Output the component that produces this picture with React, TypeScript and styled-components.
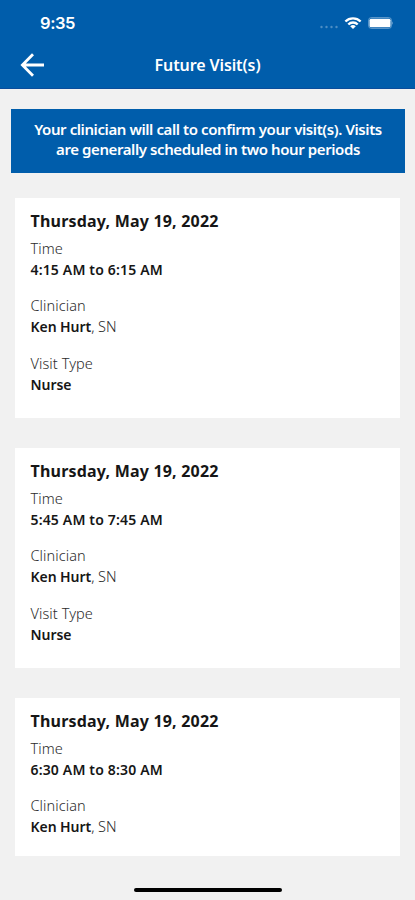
import React from "react";
import styled, { createGlobalStyle } from "styled-components";

const GlobalStyle = createGlobalStyle`
  * { box-sizing: border-box; }
  body {
    margin: 0;
    background: #f1f1f1;
    font-family: "Noto Sans", "Open Sans", sans-serif;
  }
`;

const Screen = styled.div`
  display: flex;
  flex-direction: column;
  width: 415px;
  height: 900px;
  overflow: hidden;
  background: #f1f1f1;
`;

const Header = styled.header`
  flex: none;
  height: 89px;
  background: #005dab;
  border-bottom: 1px solid #0a4d9c;
  color: #fff;
`;

const StatusBar = styled.div`
  display: flex;
  align-items: center;
  justify-content: space-between;
  height: 46px;
  padding: 0 22px 0 40px;
`;

const Clock = styled.span`
  font: 600 16.5px/20px Inter, sans-serif;
  letter-spacing: -0.4px;
`;

const StatusIcons = styled.div`
  display: flex;
  align-items: center;
`;

const NavBar = styled.div`
  display: grid;
  grid-template-columns: 60px 1fr 60px;
  align-items: center;
  height: 38px;
`;

const BackButton = styled.button`
  display: flex;
  padding: 0 0 0 19px;
  border: 0;
  background: none;
  color: inherit;
`;

const Title = styled.h1`
  margin: 0;
  text-align: center;
  font-size: 16px;
  line-height: 22px;
  font-weight: 600;
  letter-spacing: -0.1px;
`;

const Banner = styled.p`
  flex: none;
  height: 64px;
  margin: 20px 10px 25px 11px;
  padding-top: 10px;
  background: #005dab;
  color: #fff;
  text-align: center;
  font-size: 15px;
  line-height: 20px;
  font-weight: 600;
  letter-spacing: -0.41px;
  white-space: nowrap;
`;

const VisitList = styled.main`
  display: flex;
  flex-direction: column;
  gap: 30px;
  padding: 0 15px;
`;

const Card = styled.section<{ $short?: boolean }>`
  height: ${(p) => (p.$short ? 158 : 220)}px;
  padding: 12px 16px 0 15.5px;
  background: #fff;
  color: #161616;
  white-space: nowrap;
`;

const VisitDate = styled.h2`
  margin: 0 0 6px;
  font-size: 16px;
  line-height: 22px;
  font-weight: 700;
  letter-spacing: 0.2px;
`;

const Field = styled.div`
  margin-bottom: 15.3px;
  line-height: 21px;
`;

const Label = styled.div`
  font-size: 14.5px;
  font-weight: 300;
  letter-spacing: 0.08px;
  color: #2b2b2b;
`;

const Value = styled.div<{ $wide?: boolean }>`
  font-size: 14px;
  font-weight: 600;
  letter-spacing: ${(p) => (p.$wide ? 0.16 : -0.06)}px;
`;

const Suffix = styled.span`
  font-size: 14.5px;
  font-weight: 300;
  color: #2b2b2b;
`;

const HomeIndicator = styled.div`
  flex: none;
  width: 148px;
  height: 4px;
  margin: 32px 0 0 134px;
  border-radius: 2px;
  background: #000;
`;

const visits = [
  { time: "4:15 AM to 6:15 AM", type: "Nurse" },
  { time: "5:45 AM to 7:45 AM", type: "Nurse" },
  { time: "6:30 AM to 8:30 AM", type: null },
];

export default function App() {
  return (
    <Screen>
      <GlobalStyle />
      <Header>
        <StatusBar>
          <Clock>9:35</Clock>
          <StatusIcons>
            <svg width="76" height="18" viewBox="0 0 76 18" fill="none">
              <g fill="#fff" opacity="0.3">
                <circle cx="4.5" cy="13" r="1.2" />
                <circle cx="9.5" cy="13" r="1.2" />
                <circle cx="14.5" cy="13" r="1.2" />
                <circle cx="19.5" cy="13" r="1.2" />
              </g>
              <g stroke="#fff" strokeWidth="2.4">
                <path d="M28.4 7.5a10.8 10.8 0 0 1 15.2 0" />
                <path d="M31.3 10.5a6.7 6.7 0 0 1 9.4 0" />
              </g>
              <path d="M33.2 12.3a4 4 0 0 1 5.6 0L36 15.1z" fill="#fff" />
              <rect x="51.5" y="3.5" width="23" height="11" rx="3" stroke="#fff" strokeOpacity="0.35" />
              <rect x="52.5" y="4.7" width="21" height="8.6" rx="1.5" fill="#fff" />
              <path d="M75.2 7.2q1.2 1.8 0 3.6z" fill="#fff" fillOpacity="0.6" />
            </svg>
          </StatusIcons>
        </StatusBar>
        <NavBar>
          <BackButton aria-label="Back">
            <svg width="26" height="26" viewBox="0 0 26 26" fill="none" stroke="#fff" strokeWidth="2.8">
              <path d="M25 13H4M14 2.2 3.4 13 14 23.8" />
            </svg>
          </BackButton>
          <Title>Future Visit(s)</Title>
        </NavBar>
      </Header>
      <Banner>
        Your clinician will call to confirm your visit(s). Visits
        <br />
        are generally scheduled in two hour periods
      </Banner>
      <VisitList>
        {visits.map((visit) => (
          <Card key={visit.time} $short={!visit.type}>
            <VisitDate>Thursday, May 19, 2022</VisitDate>
            <Field>
              <Label>Time</Label>
              <Value $wide>{visit.time}</Value>
            </Field>
            <Field>
              <Label>Clinician</Label>
              <Value>
                Ken Hurt<Suffix>, SN</Suffix>
              </Value>
            </Field>
            {visit.type && (
              <Field>
                <Label>Visit Type</Label>
                <Value>{visit.type}</Value>
              </Field>
            )}
          </Card>
        ))}
      </VisitList>
      <HomeIndicator />
    </Screen>
  );
}
